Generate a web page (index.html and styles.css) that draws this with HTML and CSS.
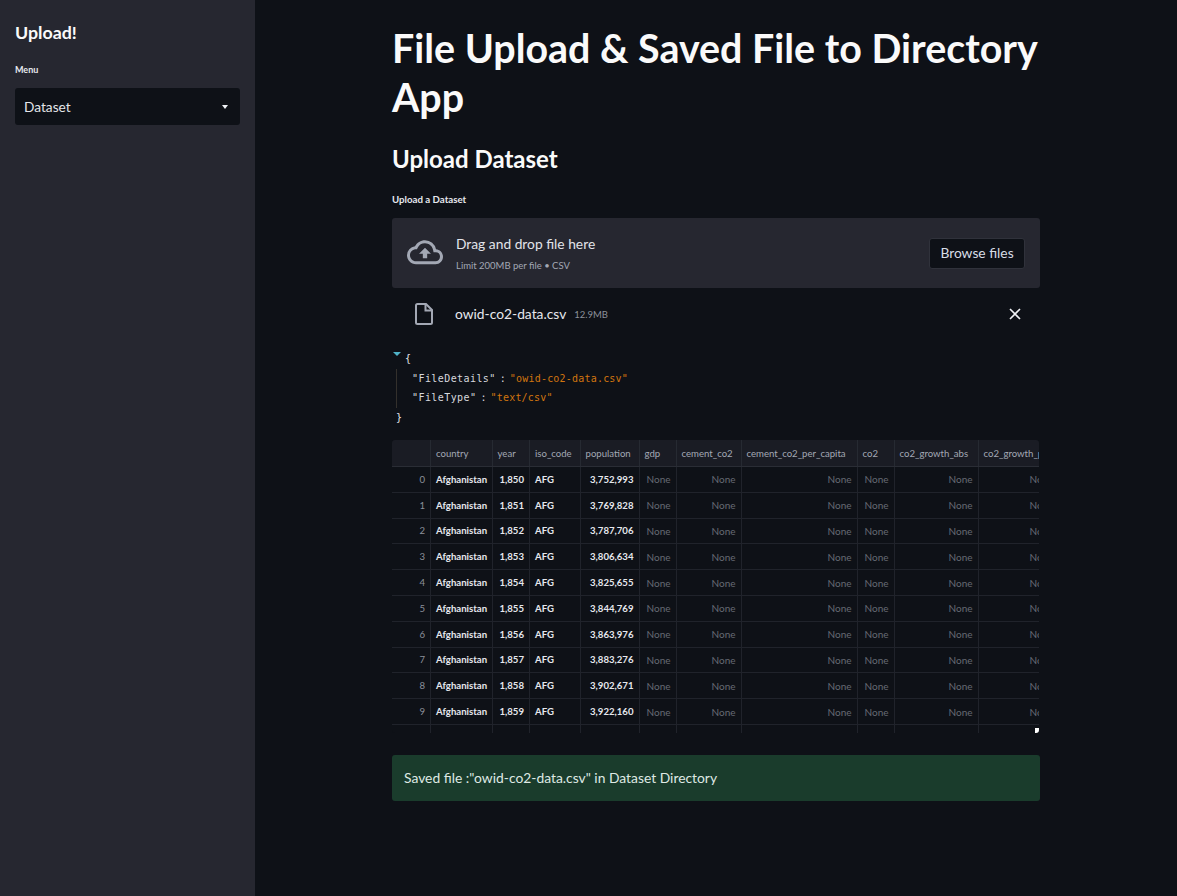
FILE: index.html
```html
<!DOCTYPE html>
<html lang="en">
<head>
<meta charset="utf-8">
<title>File Upload App</title>
<link rel="stylesheet" href="styles.css">
</head>
<body>
<div class="app">
  <aside class="sidebar">
    <h2 class="side-title">Upload!</h2>
    <div class="field-label side-label">Menu</div>
    <div class="select"><span>Dataset</span><span class="caret"></span></div>
  </aside>
  <main class="main">
    <div class="content">
      <h1 class="title">File Upload &amp; Saved File to Directory App</h1>
      <h2 class="subtitle">Upload Dataset</h2>
      <div class="field-label">Upload a Dataset</div>
      <section class="dropzone">
        <svg class="cloud" width="36" height="26" viewBox="0 0 24 17" fill="none"><path d="M19.35 6.04A7.49 7.49 0 0 0 12 0C9.11 0 6.6 1.64 5.35 4.04A5.99 5.99 0 0 0 0 10c0 3.31 2.69 6 6 6h13c2.76 0 5-2.24 5-5 0-2.64-2.05-4.78-4.65-4.96zM19 14H6c-2.21 0-4-1.79-4-4 0-2.05 1.53-3.76 3.56-3.97l1.07-.11.5-.95A5.47 5.47 0 0 1 12 2c2.62 0 4.88 1.86 5.39 4.43l.3 1.5 1.53.11A2.98 2.98 0 0 1 22 11c0 1.65-1.35 3-3 3zM8 9h2.55v3h2.9V9H16l-4-4z" fill="#a3a8b4"/></svg>
        <div class="drop-text">
          <div class="drop-main">Drag and drop file here</div>
          <div class="drop-sub">Limit 200MB per file • CSV</div>
        </div>
        <div class="browse">Browse files</div>
      </section>
      <section class="file-row">
        <svg class="file-icon" width="18" height="22" viewBox="0 0 18 22" fill="none"><path d="M2.5 1h8.5l6 6v12.5a1.5 1.5 0 0 1-1.500 1.500h-13a1.500 1.500 0 0 1-1.500-1.500v-17a1.500 1.500 0 0 1 1.500-1.500z" stroke="#a3a8b4" stroke-width="2"/><path d="M10.500 1v6.500h6.500" stroke="#a3a8b4" stroke-width="2"/></svg>
        <span class="file-name">owid-co2-data.csv</span>
        <span class="file-size">12.9MB</span>
        <svg class="close" width="12" height="12" viewBox="0 0 12 12"><path d="M1 1l10 10M11 1L1 11" stroke="#f0f2f6" stroke-width="1.600"/></svg>
      </section>
      <section class="json">
        <div class="json-line json-open"><span class="json-toggle"></span><span>{</span></div>
        <div class="json-body">
          <div class="json-line"><span class="json-key">"FileDetails"</span> <span class="json-sep">:</span> <span class="json-val">"owid-co2-data.csv"</span></div>
          <div class="json-line"><span class="json-key">"FileType"</span> <span class="json-sep">:</span> <span class="json-val">"text/csv"</span></div>
        </div>
        <div class="json-line">}</div>
      </section>
      <section class="frame">
        <table class="grid">
          <colgroup><col class="c0"><col class="c1"><col class="c2"><col class="c3"><col class="c4"><col class="c5"><col class="c6"><col class="c7"><col class="c8"><col class="c9"><col class="c10"></colgroup>
          <thead><tr><th></th><th>country</th><th>year</th><th>iso_code</th><th>population</th><th>gdp</th><th>cement_co2</th><th>cement_co2_per_capita</th><th>co2</th><th>co2_growth_abs</th><th>co2_growth_prct</th></tr></thead>
          <tbody>
            <tr><td class="idx">0</td><td class="strong">Afghanistan</td><td class="num strong">1,850</td><td class="strong">AFG</td><td class="num strong">3,752,993</td><td class="none">None</td><td class="none num">None</td><td class="none num">None</td><td class="none">None</td><td class="none num">None</td><td class="none num">None</td></tr>
            <tr><td class="idx">1</td><td class="strong">Afghanistan</td><td class="num strong">1,851</td><td class="strong">AFG</td><td class="num strong">3,769,828</td><td class="none">None</td><td class="none num">None</td><td class="none num">None</td><td class="none">None</td><td class="none num">None</td><td class="none num">None</td></tr>
            <tr><td class="idx">2</td><td class="strong">Afghanistan</td><td class="num strong">1,852</td><td class="strong">AFG</td><td class="num strong">3,787,706</td><td class="none">None</td><td class="none num">None</td><td class="none num">None</td><td class="none">None</td><td class="none num">None</td><td class="none num">None</td></tr>
            <tr><td class="idx">3</td><td class="strong">Afghanistan</td><td class="num strong">1,853</td><td class="strong">AFG</td><td class="num strong">3,806,634</td><td class="none">None</td><td class="none num">None</td><td class="none num">None</td><td class="none">None</td><td class="none num">None</td><td class="none num">None</td></tr>
            <tr><td class="idx">4</td><td class="strong">Afghanistan</td><td class="num strong">1,854</td><td class="strong">AFG</td><td class="num strong">3,825,655</td><td class="none">None</td><td class="none num">None</td><td class="none num">None</td><td class="none">None</td><td class="none num">None</td><td class="none num">None</td></tr>
            <tr><td class="idx">5</td><td class="strong">Afghanistan</td><td class="num strong">1,855</td><td class="strong">AFG</td><td class="num strong">3,844,769</td><td class="none">None</td><td class="none num">None</td><td class="none num">None</td><td class="none">None</td><td class="none num">None</td><td class="none num">None</td></tr>
            <tr><td class="idx">6</td><td class="strong">Afghanistan</td><td class="num strong">1,856</td><td class="strong">AFG</td><td class="num strong">3,863,976</td><td class="none">None</td><td class="none num">None</td><td class="none num">None</td><td class="none">None</td><td class="none num">None</td><td class="none num">None</td></tr>
            <tr><td class="idx">7</td><td class="strong">Afghanistan</td><td class="num strong">1,857</td><td class="strong">AFG</td><td class="num strong">3,883,276</td><td class="none">None</td><td class="none num">None</td><td class="none num">None</td><td class="none">None</td><td class="none num">None</td><td class="none num">None</td></tr>
            <tr><td class="idx">8</td><td class="strong">Afghanistan</td><td class="num strong">1,858</td><td class="strong">AFG</td><td class="num strong">3,902,671</td><td class="none">None</td><td class="none num">None</td><td class="none num">None</td><td class="none">None</td><td class="none num">None</td><td class="none num">None</td></tr>
            <tr><td class="idx">9</td><td class="strong">Afghanistan</td><td class="num strong">1,859</td><td class="strong">AFG</td><td class="num strong">3,922,160</td><td class="none">None</td><td class="none num">None</td><td class="none num">None</td><td class="none">None</td><td class="none num">None</td><td class="none num">None</td></tr>
            <tr><td class="idx">10</td><td class="strong">Afghanistan</td><td class="num strong">1,860</td><td class="strong">AFG</td><td class="num strong">3,941,700</td><td class="none">None</td><td class="none num">None</td><td class="none num">None</td><td class="none">None</td><td class="none num">None</td><td class="none num">None</td></tr>
          </tbody>
        </table>
        <span class="resize-handle"></span>
      </section>
      <section class="success">Saved file :"owid-co2-data.csv" in Dataset Directory</section>
    </div>
  </main>
</div>
</body>
</html>
```
FILE: styles.css
```css
* { box-sizing: border-box; }
html, body { margin: 0; height: 100%; background: #0e1117; }
body {
  font-family: "Lato", "Noto Sans", sans-serif;
  color: #fafafa;
  overflow: hidden;
}
.app { display: flex; height: 896px; }
.sidebar {
  width: 255px;
  flex: none;
  background: #262730;
  padding: 22px 15px 0;
}
.side-title { margin: 0; font-size: 17.800px; line-height: 21px; font-weight: 700; }
.field-label { font-size: 9.700px; line-height: 13px; color: #e6e8ee; font-weight: 700; }
.side-label { margin-top: 19px; font-size: 9px; line-height: 16px; }
.select {
  margin-top: 10px;
  height: 37px;
  width: 225px;
  background: #0e1117;
  border-radius: 3px;
  display: flex;
  align-items: center;
  justify-content: space-between;
  padding: 0 12px 0 9px;
  font-size: 13.700px;
  color: #e4e6ea;
}
.caret {
  width: 0; height: 0;
  border-left: 3.500px solid transparent;
  border-right: 3.500px solid transparent;
  border-top: 4px solid #f0f2f6;
}
.main { flex: 1; min-width: 0; }
.content { width: 648px; margin: 0 auto; padding-top: 23px; }
.title { margin: 0; font-size: 39.400px; line-height: 49px; font-weight: 700; color: #fafafa; }
.subtitle { margin: 23px 0 0; font-size: 24px; line-height: 30px; font-weight: 700; }
.content > .field-label { margin-top: 19px; }
.dropzone {
  margin-top: 12px;
  height: 70px;
  background: #262730;
  border-radius: 3px;
  display: flex;
  align-items: center;
  padding: 0 15px;
}
.cloud { flex: none; }
.drop-text { margin-left: 13px; flex: 1; }
.drop-main { font-size: 13.800px; line-height: 19px; color: #e2e4ea; }
.drop-sub { margin-top: 6px; font-size: 9.500px; line-height: 13px; color: #a3a8b4; }
.browse {
  width: 96px; height: 31px;
  background: #0e1117;
  border: 1px solid #30323b;
  border-radius: 3px;
  padding-bottom: 2px;
  font-size: 13.800px;
  color: #d8dde6;
  display: flex; align-items: center; justify-content: center;
}
.file-row { height: 52px; display: flex; align-items: center; padding: 0 19px 0 23px; }
.file-name { margin-left: 22px; margin-bottom: 2px; font-size: 13.800px; color: #e6e8ee; }
.file-size { margin-left: 8px; margin-top: 1px; font-size: 9.500px; color: #8c909a; flex: 1; }
.json {
  margin-top: 9px;
  font-family: "DejaVu Sans Mono", "Liberation Mono", monospace;
  font-size: 10px;
  color: #e3e5ea;
  padding-left: 4px;
}
.json-line { height: 19.500px; line-height: 19.500px; white-space: pre; word-spacing: -2px; }
.json-open { position: relative; padding-left: 9px; }
.json-toggle {
  position: absolute;
  left: -3px; top: 3px;
  width: 0; height: 0;
  border-left: 4px solid transparent;
  border-right: 4px solid transparent;
  border-top: 4px solid #4fb3c8;
}
.json-body { padding-left: 15px; border-left: 1px solid #33302c; }
.json-key { letter-spacing: .42px; color: #d6d8dd; }
.json-sep { color: #d6d8dd; }
.json-val { color: #d2750f; letter-spacing: .2px; }
.frame {
  position: relative;
  margin-top: 13px;
  width: 647px;
  height: 293px;
  overflow: hidden;
  background: #0e1117;
  border-radius: 3px;
}
.grid {
  table-layout: fixed;
  border-collapse: collapse;
  width: 667px;
  font-size: 9.600px;
}
.c0 { width: 38.500px; } .c1 { width: 61.500px; } .c2 { width: 37.500px; } .c3 { width: 50.500px; }
.c4 { width: 59px; } .c5 { width: 37px; } .c6 { width: 65px; } .c7 { width: 116px; }
.c8 { width: 37px; } .c9 { width: 84px; } .c10 { width: 81px; }
.grid th {
  height: 26.500px;
  background: #1a1c24;
  color: #a3a8b4;
  font-weight: 400;
  text-align: left;
  padding: 0 5px;
  white-space: nowrap;
  overflow: hidden;
  border-right: 1px solid #262a32;
  border-bottom: 1px solid #2a2d35;
}
.grid td {
  height: 25.800px;
  padding: 0 5px;
  white-space: nowrap;
  overflow: hidden;
  border-right: 1px solid #20232b;
  border-bottom: 1px solid #20232b;
}
.grid .idx { text-align: right; color: #8c909a; }
.grid .strong { color: #e6e8ee; font-weight: 700; }
.grid .num { text-align: right; }
.grid .none { color: #666a74; padding-left: 7px; font-size: 10px; }
.resize-handle { position: absolute; right: 0; bottom: 0; width: 4px; height: 5px; background: #fff; }
.success {
  margin-top: 22px;
  height: 46px;
  background: #1a3c2c;
  border-radius: 3px;
  padding: 0 12px 2px;
  display: flex;
  align-items: center;
  font-size: 13.850px;
  color: #dfe9e4;
}
```
